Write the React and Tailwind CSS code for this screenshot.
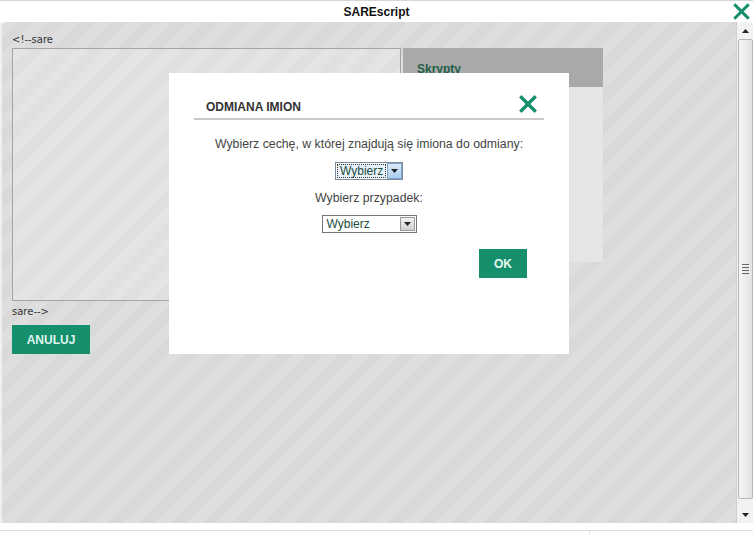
import React from "react";

const stripes =
  "bg-[repeating-linear-gradient(135deg,#dedede_0px,#dedede_11px,#d9d9d9_11px,#d9d9d9_22px)]";

function XIcon({ size = 18, stroke = 3.2 }) {
  return (
    <svg width={size} height={size} viewBox="0 0 18 18">
      <path
        d="M2.5 2.5 L15.5 15.5 M15.5 2.5 L2.5 15.5"
        stroke="#16906c"
        strokeWidth={stroke}
        strokeLinecap="square"
      />
    </svg>
  );
}

function Arrow({ up }) {
  return (
    <svg width="7" height="4" viewBox="0 0 7 4">
      <path d={up ? "M0 4 L3.5 0 L7 4 Z" : "M0 0 L7 0 L3.5 4 Z"} fill="#222" />
    </svg>
  );
}

export default function App() {
  return (
    <div
      className="w-[753px] h-[535px] bg-white flex flex-col overflow-hidden relative"
      style={{ fontFamily: "Arial, 'Liberation Sans', sans-serif" }}
    >
      {/* title bar */}
      <div className="h-[22px] border-t border-[#d6d6d6] flex items-center justify-center relative shrink-0">
        <span className="text-[12px] font-bold text-[#111] font-['Liberation_Sans',Arial,sans-serif]">
          SAREscript
        </span>
        <div className="absolute right-[3px] top-[2px]">
          <XIcon size={17} stroke={3.2} />
        </div>
      </div>

      {/* main */}
      <div className="flex h-[501px] shrink-0">
        <div className="w-[2px] bg-[#f0f0f0]" />
        <div className={`flex-1 ${stripes} rounded-tl-[4px] relative pl-[10px] pt-[11px]`}>
          <div className="text-[10px] leading-[14px] text-[#333] font-['DejaVu_Sans',Verdana,sans-serif] h-[15px]">
            &lt;!--sare
          </div>
          <div className="flex gap-[2px]">
            <div className="w-[389px] h-[253px] border border-[#a5a5a5] bg-[repeating-linear-gradient(135deg,#e4e4e4_0px,#e4e4e4_11px,#e0e0e0_11px,#e0e0e0_22px)]" />
            <div className="w-[200px] h-[214px] flex flex-col">
              <div className="h-[39px] bg-[#a9a9a9] pl-[14px] pt-[12px] text-[12px] font-bold text-[#1e5e48]">
                Skrypty
              </div>
              <div className="flex-1 bg-[#e6e6e6] opacity-90" />
            </div>
          </div>
          <div className="text-[10px] leading-[14px] text-[#333] font-['DejaVu_Sans',Verdana,sans-serif] mt-[4px]">
            sare--&gt;
          </div>
          <button className="mt-[6px] w-[78px] h-[29px] bg-[#16906c] text-[#dff5ee] text-[12px] font-bold flex items-center justify-center">
            ANULUJ
          </button>

          {/* modal */}
          <div className="absolute left-[167px] top-[51px] w-[400px] h-[281px] bg-white flex flex-col items-center">
            <div className="w-[350px] mt-[20px] h-[27px] border-b-2 border-[#c9c9c9] flex items-start justify-between">
              <span className="pl-[12px] pt-[5px] text-[12px] font-bold text-[#333]">
                ODMIANA IMION
              </span>
              <div className="mr-[7px] mt-[2px]">
                <XIcon size={18} stroke={3.4} />
              </div>
            </div>
            <div className="mt-[17px] text-[12.3px] text-[#444] leading-[14px]">
              Wybierz cechę, w której znajdują się imiona do odmiany:
            </div>
            <div className="mt-[11px] w-[68px] h-[18px] border border-[#7a8a99] flex items-stretch bg-white">
              <div className="flex-1 m-[1px] border border-dotted border-[#333] bg-[#e8f1fa] text-[12px] leading-[12px] text-[#1a4f3d] flex items-center pl-[2px]">
                Wybierz
              </div>
              <div className="w-[15px] bg-[linear-gradient(#dcebfb,#a9cdf0)] border border-[#7ea6cf] flex items-center justify-center">
                <Arrow />
              </div>
            </div>
            <div className="mt-[11px] text-[12.3px] text-[#444] leading-[14px]">
              Wybierz przypadek:
            </div>
            <div className="mt-[10px] w-[95px] h-[18px] border border-[#777] flex items-stretch bg-white">
              <div className="flex-1 text-[12px] text-[#1a4f3d] flex items-center pl-[4px]">
                Wybierz
              </div>
              <div className="w-[15px] m-[1px] bg-[linear-gradient(#f2f2f2,#cfcfcf)] border border-[#999] flex items-center justify-center">
                <Arrow />
              </div>
            </div>
            <div className="w-[350px] flex justify-end mt-[16px]">
              <button className="mr-[17px] w-[48px] h-[29px] bg-[#16906c] text-[#e8f7f1] text-[12px] font-bold flex items-center justify-center">
                OK
              </button>
            </div>
          </div>
        </div>

        {/* scrollbar */}
        <div className="w-[17px] bg-[#f2f2f2] border-l border-[#cfcfcf] flex flex-col items-center">
          <div className="h-[17px] w-full flex items-center justify-center">
            <Arrow up />
          </div>
          <div className="flex-1 w-[15px] bg-[linear-gradient(90deg,#f6f6f6,#e2e2e2)] border border-[#b5b5b5] rounded-[2px] flex flex-col items-center justify-center gap-[2px]">
            <div className="w-[7px] h-[1px] bg-[#666]" />
            <div className="w-[7px] h-[1px] bg-[#666]" />
            <div className="w-[7px] h-[1px] bg-[#666]" />
            <div className="w-[7px] h-[1px] bg-[#666]" />
          </div>
          <div className="h-[24px] w-full flex items-end justify-center pb-[6px]">
            <Arrow />
          </div>
        </div>
      </div>

      {/* bottom strip */}
      <div className="flex-1 flex flex-col">
        <div className="h-[7px]" />
        <div className="flex-1 border-t border-[#dedede] flex">
          <div className="w-[590px] border-r border-[#e2e2e2]" />
        </div>
      </div>
    </div>
  );
}
